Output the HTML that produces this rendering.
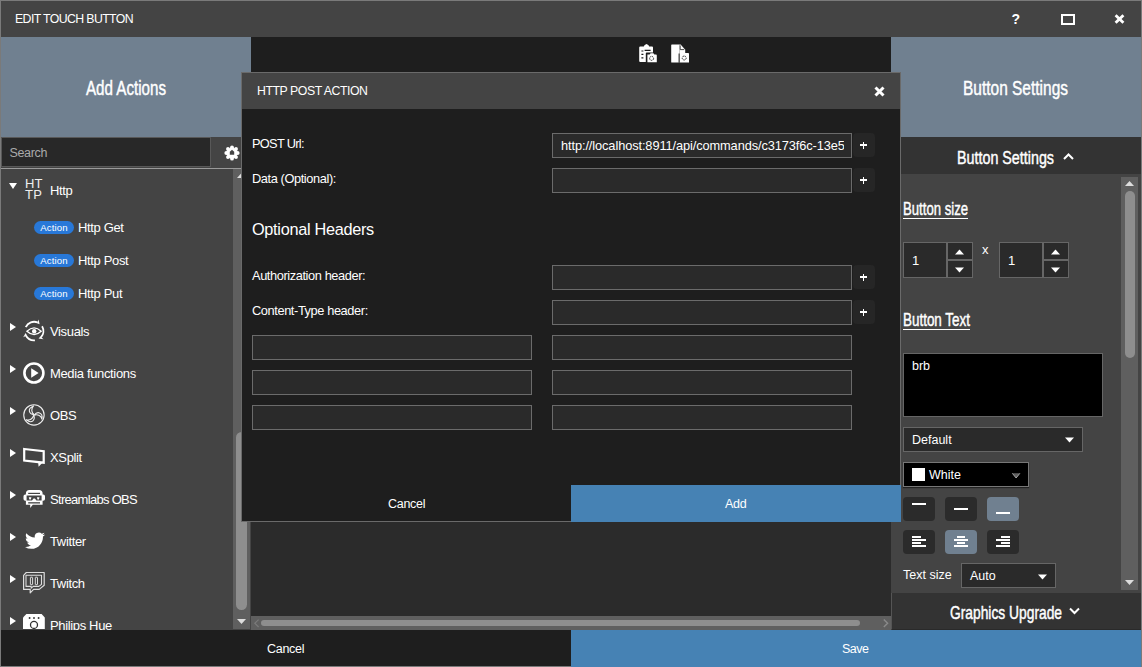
<!DOCTYPE html>
<html><head><meta charset="utf-8">
<style>
*{box-sizing:border-box;margin:0;padding:0}
html,body{width:1142px;height:667px;overflow:hidden}
body{position:relative;background:#7a7a7a;font-family:"Liberation Sans",sans-serif;color:#fff;font-size:13px}
.a{position:absolute}
.t{position:absolute;white-space:nowrap;line-height:1}
.cond{display:inline-block;transform-origin:0 0}
svg{position:absolute;overflow:visible}
.inp{position:absolute;background:#2a2a2a;border:1px solid #6b6b6b}
.plus{position:absolute;background:#262626;border-radius:4px;width:22px;height:24px}
.plus:before{content:"";position:absolute;left:7px;top:11.3px;width:7px;height:1.3px;background:#fff}
.plus:after{content:"";position:absolute;left:9.85px;top:8.5px;width:1.3px;height:7px;background:#fff}
.badge{position:absolute;left:34px;width:40px;height:13px;border-radius:7px;background:#2878d8;font-size:9.6px;line-height:13.6px;text-align:center;letter-spacing:0.1px}
.item{position:absolute;font-size:13px;line-height:1;letter-spacing:-0.35px;white-space:nowrap}
.abtn{position:absolute;width:32px;height:24px;border-radius:4px;background:#2b2b2b}
.abtn i{position:absolute;height:2px;background:#fff}
</style></head>
<body>
<!-- title bar -->
<div class="a" style="left:1px;top:1px;width:1140px;height:36px;background:#444"></div>
<div class="t" style="left:15px;top:12.5px;font-size:12.3px;letter-spacing:-0.6px">EDIT TOUCH BUTTON</div>


<div class="t" style="left:1011.5px;top:12px;font-size:14px;font-weight:bold">?</div>
<div class="a" style="left:1061px;top:14px;width:14px;height:11px;border:2px solid #fff"></div>
<svg style="left:1114px;top:14px" width="11" height="10" viewBox="0 0 11 10"><path d="M1.6 1.2l7.8 7.6M9.4 1.2l-7.8 7.6" stroke="#fff" stroke-width="2.8"/></svg>

<!-- left panel -->
<div class="a" style="left:1px;top:37px;width:250px;height:593px;background:#444"></div>
<div class="a" style="left:1px;top:37px;width:250px;height:100px;background:#708090"></div>
<div class="t" style="left:86px;top:77.7px;font-size:20.5px"><span class="cond" style="transform:scaleX(0.739);font-weight:normal;-webkit-text-stroke:0.45px #fff">Add Actions</span></div>


<!-- search row -->
<div class="a" style="left:1px;top:137px;width:210px;height:30px;background:#282828;border:1px solid #585858"></div>
<div class="t" style="left:9.5px;top:147px;font-size:12.5px;color:#aaa;letter-spacing:-0.35px">Search</div>
<svg style="left:224px;top:144.6px" width="16" height="16" viewBox="0 0 16 16"><circle cx="8" cy="8" r="5.6" fill="#fff"/><circle cx="8.00" cy="2.30" r="1.9" fill="#fff"/><circle cx="12.03" cy="3.97" r="1.9" fill="#fff"/><circle cx="13.70" cy="8.00" r="1.9" fill="#fff"/><circle cx="12.03" cy="12.03" r="1.9" fill="#fff"/><circle cx="8.00" cy="13.70" r="1.9" fill="#fff"/><circle cx="3.97" cy="12.03" r="1.9" fill="#fff"/><circle cx="2.30" cy="8.00" r="1.9" fill="#fff"/><circle cx="3.97" cy="3.97" r="1.9" fill="#fff"/><path d="M8 4.7L10.2 6.7V9.7H5.8V6.7Z" fill="#444"/></svg>
<div class="a" style="left:1px;top:168px;width:250px;height:1px;background:#9a9a9a"></div>
<!-- left scrollbar -->
<div class="a" style="left:233px;top:169px;width:17px;height:460px;background:#5f5f5f"></div>
<div class="a" style="left:236px;top:432px;width:11px;height:178px;border-radius:5.5px;background:#8e8e8e"></div>
<svg style="left:237px;top:619px" width="9" height="6"><path d="M0 0h9L4.5 5z" fill="#ddd"/></svg>
<svg style="left:237px;top:173px" width="9" height="6"><path d="M0 5h9L4.5 0z" fill="#ddd"/></svg>

<!-- Http category -->
<svg style="left:9px;top:183px" width="8" height="6"><path d="M0 0h8L4 6z" fill="#fff"/></svg>
<div class="t" style="left:25px;top:179.3px;font-size:13px;line-height:10.3px;letter-spacing:0.2px;color:#eee">HT<br>TP</div>
<div class="item" style="left:50px;top:184px">Http</div>
<div class="badge" style="top:221px">Action</div><div class="item" style="left:78px;top:221px">Http Get</div>
<div class="badge" style="top:254px">Action</div><div class="item" style="left:78px;top:254px">Http Post</div>
<div class="badge" style="top:287px">Action</div><div class="item" style="left:78px;top:287px">Http Put</div>

<!-- categories -->
<svg style="left:10px;top:323px" width="6" height="8"><path d="M0 0v8l6-4z" fill="#fff"/></svg>
<div class="item" style="left:50px;top:325px">Visuals</div>
<svg style="left:10px;top:365px" width="6" height="8"><path d="M0 0v8l6-4z" fill="#fff"/></svg>
<div class="item" style="left:50px;top:367px">Media functions</div>
<svg style="left:10px;top:407px" width="6" height="8"><path d="M0 0v8l6-4z" fill="#fff"/></svg>
<div class="item" style="left:50px;top:409px">OBS</div>
<svg style="left:10px;top:449px" width="6" height="8"><path d="M0 0v8l6-4z" fill="#fff"/></svg>
<div class="item" style="left:50px;top:451px">XSplit</div>
<svg style="left:10px;top:491px" width="6" height="8"><path d="M0 0v8l6-4z" fill="#fff"/></svg>
<div class="item" style="left:50px;top:493px;letter-spacing:-0.7px">Streamlabs OBS</div>
<svg style="left:10px;top:533px" width="6" height="8"><path d="M0 0v8l6-4z" fill="#fff"/></svg>
<div class="item" style="left:50px;top:535px">Twitter</div>
<svg style="left:10px;top:575px" width="6" height="8"><path d="M0 0v8l6-4z" fill="#fff"/></svg>
<div class="item" style="left:50px;top:577px">Twitch</div>
<svg style="left:10px;top:617px" width="6" height="8"><path d="M0 0v8l6-4z" fill="#fff"/></svg>
<div class="a" style="left:1px;top:600px;width:232px;height:30px;overflow:hidden"><div class="item" style="left:49px;top:19px">Philips Hue</div></div>


<!-- category icons -->
<svg style="left:23px;top:321px" width="22" height="22" viewBox="0 0 22 22">
 <g fill="none" stroke="#fff" stroke-width="1.8"><path d="M2.74 6.02A9.3 9.3 0 0 1 14.73 1.54"/><path d="M19.07 5.31A9.3 9.3 0 0 1 17.90 16.44"/><path d="M11.91 19.36A9.3 9.3 0 0 1 2.89 14.47"/></g>
 <g fill="#fff"><path d="M14.07 2.35L15.58 -1.57L16.58 3.34z"/><path d="M17.36 15.55L20.53 18.30L15.58 17.56z"/><path d="M3.91 14.25L0.27 16.35L2.59 11.91z"/></g>
 <path d="M3.9 10.2Q11.1 3.6 18.2 10.2Q11.1 16.8 3.9 10.2Z" fill="none" stroke="#fff" stroke-width="1.3"/>
 <circle cx="11.2" cy="10.2" r="2.2" fill="#fff"/>
</svg>
<svg style="left:23px;top:362px" width="22" height="22" viewBox="0 0 22 22">
 <circle cx="10.9" cy="11" r="9.5" fill="none" stroke="#fff" stroke-width="2.6"/>
 <path d="M8.2 6.3v9.4l7.4-4.7z" fill="#fff"/>
</svg>
<svg style="left:23px;top:404px" width="22" height="22" viewBox="0 0 22 22">
 <circle cx="10.95" cy="10.95" r="10.2" fill="none" stroke="#eee" stroke-width="1.1"/>
 <g fill="none" stroke="#eee" stroke-width="1.1" stroke-linejoin="round">
  <path d="M11 10.6C6.2 10.2 3.6 4.6 10.6 1.9C7.6 5 8.6 8.4 11 10.6Z"/><path d="M11 10.6C6.2 10.2 3.6 4.6 10.6 1.9C7.6 5 8.6 8.4 11 10.6Z" transform="rotate(120 10.95 10.95)"/><path d="M11 10.6C6.2 10.2 3.6 4.6 10.6 1.9C7.6 5 8.6 8.4 11 10.6Z" transform="rotate(240 10.95 10.95)"/>
 </g>
</svg>
<svg style="left:23px;top:448px" width="23" height="19" viewBox="0 0 23 19">
 <path d="M1.2 1L20.7 3.2V14.7L1.2 12.6Z" fill="none" stroke="#fff" stroke-width="2.2" stroke-linejoin="miter"/>
 <path d="M15.2 14.6L19.2 15L15.6 18.8Z" fill="#fff"/>
</svg>
<svg style="left:23px;top:489px" width="23" height="19" viewBox="0 0 23 19">
 <path d="M6.4 0.9H16.1A3.5 3.5 0 0 1 19.6 4.4V5.4H20.2A1.8 1.8 0 0 1 22 7.2V10A1.8 1.8 0 0 1 20.2 11.8H19.6V15.7H9.8L7.2 19V15.7H2.9V11.8H2.3A1.8 1.8 0 0 1 0.5 10V7.2A1.8 1.8 0 0 1 2.3 5.4H2.9V4.4A3.5 3.5 0 0 1 6.4 0.9Z" fill="#fff"/>
 <rect x="5.2" y="3.8" width="11.8" height="1.2" fill="#444"/>
 <path d="M3.6 6.6H18.6V11.4H13.4L11.9 9.6H10.5L9 11.4H3.6Z" fill="#444"/>
 <path d="M5.8 8.3H8.4L7.8 10.6H6.4ZM13.9 8.3H16.5L15.9 10.6H14.5Z" fill="#fff"/>
 <rect x="5.2" y="13.2" width="11.8" height="1.3" fill="#444"/>
</svg>
<svg style="left:25px;top:532px" width="20" height="17" viewBox="0 1.6 24 20.4">
 <path fill="#fff" d="M23.953 4.57a10 10 0 01-2.825.775 4.958 4.958 0 002.163-2.723c-.951.555-2.005.959-3.127 1.184a4.92 4.92 0 00-8.384 4.482C7.69 8.095 4.067 6.13 1.64 3.162a4.822 4.822 0 00-.666 2.475c0 1.71.87 3.213 2.188 4.096a4.904 4.904 0 01-2.228-.616v.06a4.923 4.923 0 003.946 4.827 4.996 4.996 0 01-2.212.085 4.936 4.936 0 004.604 3.417 9.867 9.867 0 01-6.102 2.105c-.39 0-.779-.023-1.17-.067a13.995 13.995 0 007.557 2.209c9.053 0 13.998-7.496 13.998-13.985 0-.21 0-.42-.015-.63A9.935 9.935 0 0024 4.59z"/>
</svg>
<svg style="left:23px;top:572px" width="22" height="22" viewBox="0 0 22 22">
 <path d="M3.3 0.5H21.2V13.2L16.2 17.4H10.6L7.2 20.8V17.4H0.6V3.3Z" fill="none" stroke="#ddd" stroke-width="1.2" stroke-linejoin="round"/>
 <path d="M3 3.3H18.5V12.4L15.9 14.4H10.2L8.2 16.2V14.4H3Z" fill="none" stroke="#ddd" stroke-width="1.1" stroke-linejoin="round"/>
 <rect x="7.4" y="5.2" width="2.2" height="7.5" rx="0.4" fill="none" stroke="#ddd" stroke-width="1"/>
 <rect x="12.3" y="5.2" width="2.2" height="7.5" rx="0.4" fill="none" stroke="#ddd" stroke-width="1"/>
</svg>
<div class="a" style="left:20px;top:610px;width:30px;height:19px;overflow:hidden">
<svg style="left:3px;top:4px" width="22" height="22" viewBox="0 0 22 22">
 <path d="M3.4 0H18.6L21.8 3.4V22H0V3.4Z" fill="#fff"/>
 <circle cx="6.6" cy="4" r="0.95" fill="#333"/><circle cx="11" cy="4" r="0.95" fill="#333"/><circle cx="15.6" cy="4" r="0.95" fill="#333"/>
 <circle cx="11" cy="10.9" r="3.5" fill="none" stroke="#333" stroke-width="1.3"/>
</svg></div>

<!-- center -->
<div class="a" style="left:251px;top:37px;width:640px;height:593px;background:#2b2b2b"></div>
<div class="a" style="left:251px;top:37px;width:640px;height:40px;background:#1e1e1e"></div>


<!-- toolbar icons -->
<svg style="left:639px;top:44px" width="19" height="19" viewBox="0 0 19 19">
 <path d="M1.2 2.4h3.6a3 3 0 0 1 1.8-2A1.2 1.2 0 0 1 8.4 0.4 3 3 0 0 1 10.2 2.4H13a1 1 0 0 1 1 1v5.2H7.8a1 1 0 0 0-1 1v8.4H1.2a1 1 0 0 1-1-1V3.4a1 1 0 0 1 1-1z" fill="#fff"/>
 <path d="M2.4 7h2M2.4 10.4h2M2.4 13.8h2M5.6 6.4h6" stroke="#1e1e1e" stroke-width="1.2"/>
 <path d="M8.4 10.6h2.2l1-1.4h2.8l1 1.4h1.6a0.8 0.8 0 0 1 0.8 0.8v6.8H8.4z" fill="#fff"/>
 <circle cx="12.6" cy="14.4" r="2" fill="none" stroke="#1e1e1e" stroke-width="0.9" stroke-dasharray="1.5 0.7"/>
</svg>
<svg style="left:671px;top:44px" width="19" height="19" viewBox="0 0 19 19">
 <path d="M0.8 0.6h7.6v18H0.8a0.6 0.6 0 0 1-0.6-0.6V1.2a0.6 0.6 0 0 1 0.6-0.6z" fill="#fff"/>
 <path d="M8.4 0.6h1.2l4.6 5.2v3.2H8.4z" fill="#fff"/>
 <path d="M8.8 0.8l5 5.2H8.8z" fill="#1e1e1e" opacity="0.0"/>
 <path d="M9.2 1.4v4.2h4" fill="none" stroke="#1e1e1e" stroke-width="0.8"/>
 <path d="M8.4 9h1l1-1.4h2.8l1 1.4h3a0.8 0.8 0 0 1 0.8 0.8v8.6H8.4z" fill="#fff"/>
 <path d="M7.6 9.4h1v9.4h-1z" fill="#1e1e1e"/>
 <circle cx="13.2" cy="14" r="2" fill="none" stroke="#1e1e1e" stroke-width="0.9" stroke-dasharray="1.5 0.7"/>
</svg>
<!-- horizontal scrollbar -->
<div class="a" style="left:251px;top:616px;width:640px;height:14px;background:#5f5f5f"></div>
<div class="a" style="left:261px;top:620px;width:599px;height:6px;border-radius:3px;background:#8e8e8e"></div>
<svg style="left:254px;top:619px" width="6" height="9"><path d="M4.6 0.6L0.8 4.3 4.6 8" fill="none" stroke="#7a7a7a" stroke-width="1.2"/></svg>
<svg style="left:883px;top:619px" width="6" height="9"><path d="M0.8 0.6L4.6 4.3 0.8 8" fill="none" stroke="#8a8a8a" stroke-width="1.4"/></svg>

<!-- right panel -->
<div class="a" style="left:891px;top:37px;width:250px;height:593px;background:#444"></div>
<div class="a" style="left:891px;top:37px;width:250px;height:100px;background:#708090"></div>


<div class="t" style="left:963px;top:78px;font-size:20.5px"><span class="cond" style="transform:scaleX(0.755);font-weight:normal;-webkit-text-stroke:0.45px #fff">Button Settings</span></div>
<div class="a" style="left:891px;top:137px;width:250px;height:37px;background:#333;border-left:1px solid #555"></div>
<div class="t" style="left:957px;top:148.8px;font-size:18.5px"><span class="cond" style="transform:scaleX(0.773);font-weight:normal;-webkit-text-stroke:0.45px #fff">Button Settings</span></div>
<svg style="left:1063px;top:153px" width="11" height="7"><path d="M1 6L5.5 1.5 10 6" fill="none" stroke="#fff" stroke-width="2"/></svg>
<!-- scrollbar -->
<div class="a" style="left:1121px;top:177px;width:17px;height:413px;background:#5f5f5f"></div>
<div class="a" style="left:1125px;top:191px;width:10px;height:167px;border-radius:5px;background:#8e8e8e"></div>
<svg style="left:1125px;top:181px" width="9" height="6"><path d="M0 5h9L4.5 0z" fill="#ddd"/></svg>
<svg style="left:1125px;top:580px" width="9" height="6"><path d="M0 0h9L4.5 5z" fill="#ddd"/></svg>
<!-- button size -->
<div class="t" style="left:903px;top:199px;font-size:19px"><span class="cond" style="transform:scaleX(0.692);font-weight:normal;-webkit-text-stroke:0.45px #fff">Button size</span></div><div class="a" style="left:903px;top:218px;width:65px;height:1.3px;background:#fff"></div>
<div class="a" style="left:903px;top:242px;width:44px;height:36px;background:#2a2a2a;border:1px solid #666"></div>
<div class="a" style="left:947px;top:242px;width:26px;height:18px;background:#2a2a2a;border:1px solid #666"></div>
<div class="a" style="left:947px;top:260px;width:26px;height:18px;background:#2a2a2a;border:1px solid #666"></div>
<svg style="left:955px;top:248.8px" width="10" height="6"><path d="M0 5.5h9L4.5 0.5z" fill="#fff"/></svg>
<svg style="left:955px;top:266.5px" width="10" height="6"><path d="M0 0.5h9L4.5 5.5z" fill="#fff"/></svg>
<div class="t" style="left:912px;top:254px;font-size:13px">1</div>
<div class="t" style="left:982px;top:243px;font-size:13px">x</div>
<div class="a" style="left:999px;top:242px;width:44px;height:36px;background:#2a2a2a;border:1px solid #666"></div>
<div class="a" style="left:1043px;top:242px;width:26px;height:18px;background:#2a2a2a;border:1px solid #666"></div>
<div class="a" style="left:1043px;top:260px;width:26px;height:18px;background:#2a2a2a;border:1px solid #666"></div>
<svg style="left:1051px;top:248.8px" width="10" height="6"><path d="M0 5.5h9L4.5 0.5z" fill="#fff"/></svg>
<svg style="left:1051px;top:266.5px" width="10" height="6"><path d="M0 0.5h9L4.5 5.5z" fill="#fff"/></svg>
<div class="t" style="left:1008px;top:254px;font-size:13px">1</div>
<!-- button text -->
<div class="t" style="left:903px;top:310px;font-size:19px"><span class="cond" style="transform:scaleX(0.707);font-weight:normal;-webkit-text-stroke:0.45px #fff">Button Text</span></div><div class="a" style="left:903px;top:329px;width:67px;height:1.3px;background:#fff"></div>
<div class="a" style="left:903px;top:353px;width:200px;height:64px;background:#000;border:1px solid #666"></div>
<div class="t" style="left:912px;top:360px;font-size:12.5px">brb</div>
<div class="a" style="left:903px;top:427px;width:180px;height:25px;background:#2a2a2a;border:1px solid #666"></div>
<div class="t" style="left:912px;top:434px;font-size:12.5px">Default</div>
<svg style="left:1065px;top:437px" width="10" height="6"><path d="M0 0.5h9L4.5 5.5z" fill="#fff"/></svg>
<div class="a" style="left:903px;top:462px;width:126px;height:25px;background:#000;border:1px solid #777;box-shadow:0 1px 1px rgba(0,0,0,0.5)"></div>
<div class="a" style="left:912px;top:468px;width:13px;height:13px;background:#fff"></div>
<div class="t" style="left:929px;top:469px;font-size:12.5px">White</div>
<svg style="left:1012px;top:472.8px" width="9" height="6"><path d="M0.3 0.3h7.6L4.1 5z" fill="#606060"/><path d="M0.3 0.3L4.1 5 7.9 0.3" fill="none" stroke="#b0b0b0" stroke-width="0.9"/></svg>
<!-- valign buttons -->
<div class="abtn" style="left:903px;top:497px"><i style="left:9px;top:6px;width:14px"></i></div>
<div class="abtn" style="left:945px;top:497px"><i style="left:9px;top:11px;width:14px"></i></div>
<div class="abtn" style="left:987px;top:497px;background:#708090"><i style="left:9px;top:15px;width:14px"></i></div>
<!-- halign buttons -->
<div class="abtn" style="left:903px;top:530px"><i style="left:9px;top:6px;width:9px"></i><i style="left:9px;top:9px;width:14px"></i><i style="left:9px;top:12px;width:9px"></i><i style="left:9px;top:15px;width:14px"></i></div>
<div class="abtn" style="left:945px;top:530px;background:#708090"><i style="left:12px;top:6px;width:8px"></i><i style="left:9px;top:9px;width:14px"></i><i style="left:12px;top:12px;width:8px"></i><i style="left:9px;top:15px;width:14px"></i></div>
<div class="abtn" style="left:987px;top:530px"><i style="left:14px;top:6px;width:9px"></i><i style="left:9px;top:9px;width:14px"></i><i style="left:14px;top:12px;width:9px"></i><i style="left:9px;top:15px;width:14px"></i></div>
<div class="t" style="left:903px;top:569px;font-size:12.5px">Text size</div>
<div class="a" style="left:961px;top:563px;width:95px;height:25px;background:#2a2a2a;border:1px solid #666"></div>
<div class="t" style="left:970px;top:570px;font-size:12.5px">Auto</div>
<svg style="left:1038px;top:574px" width="10" height="6"><path d="M0 0.5h9L4.5 5.5z" fill="#fff"/></svg>
<!-- graphics upgrade -->
<div class="a" style="left:891px;top:593px;width:250px;height:37px;background:#333;border-left:1px solid #555;border-bottom:1px solid #2a2a2a"></div>
<div class="t" style="left:950px;top:604px;font-size:18.5px"><span class="cond" style="transform:scaleX(0.746);font-weight:normal;-webkit-text-stroke:0.45px #fff">Graphics Upgrade</span></div>
<svg style="left:1069px;top:607px" width="11" height="8"><path d="M1 1.5L5.5 6 10 1.5" fill="none" stroke="#fff" stroke-width="2"/></svg>

<!-- bottom bar -->
<div class="a" style="left:1px;top:630px;width:570px;height:36px;background:#1e1e1e"></div>
<div class="a" style="left:571px;top:630px;width:570px;height:37px;background:#4682b4"></div>
<div class="t" style="left:267px;top:643px;font-size:12.5px;letter-spacing:-0.3px">Cancel</div>
<div class="t" style="left:842px;top:643px;font-size:12.5px;letter-spacing:-0.5px">Save</div>


<!-- modal -->
<div class="a" style="left:241px;top:72px;width:660px;height:450px;background:#1e1e1e;border:1px solid #6a6a6a"></div>
<div class="a" style="left:242px;top:73px;width:658px;height:36px;background:#444"></div>
<div class="t" style="left:257px;top:85px;font-size:12.3px;letter-spacing:-0.45px">HTTP POST ACTION</div>
<svg style="left:874px;top:86px" width="11" height="11" viewBox="0 0 11 11"><path d="M1.5 1.5l8 8M9.5 1.5l-8 8" stroke="#fff" stroke-width="3"/></svg>
<div class="t" style="left:252px;top:137.5px;font-size:12.8px;letter-spacing:-0.7px">POST Url:</div>
<div class="t" style="left:252px;top:172.5px;font-size:12.8px;letter-spacing:-0.4px">Data (Optional):</div>
<div class="inp" style="left:552px;top:133px;width:300px;height:25px;overflow:hidden"><div class="t" style="left:8px;top:5.5px;font-size:12.8px;letter-spacing:-0.1px">http://localhost:8911/api/commands/c3173f6c-13e5</div><div class="a" style="left:291px;top:0;width:8px;height:23px;background:#2a2a2a"></div></div>
<div class="plus" style="left:853px;top:133px"></div>
<div class="inp" style="left:552px;top:168px;width:300px;height:25px"></div>
<div class="plus" style="left:853px;top:168px"></div>
<div class="t" style="left:252px;top:221px;font-size:16.3px;letter-spacing:-0.3px">Optional Headers</div>
<div class="t" style="left:252px;top:269.5px;font-size:12.8px;letter-spacing:-0.4px">Authorization header:</div>
<div class="t" style="left:252px;top:304.5px;font-size:12.8px;letter-spacing:-0.4px">Content-Type header:</div>
<div class="inp" style="left:552px;top:265px;width:300px;height:25px"></div>
<div class="plus" style="left:853px;top:265px"></div>
<div class="inp" style="left:552px;top:300px;width:300px;height:25px"></div>
<div class="plus" style="left:853px;top:300px"></div>
<div class="inp" style="left:252px;top:335px;width:280px;height:25px"></div>
<div class="inp" style="left:552px;top:335px;width:300px;height:25px"></div>
<div class="inp" style="left:252px;top:370px;width:280px;height:25px"></div>
<div class="inp" style="left:552px;top:370px;width:300px;height:25px"></div>
<div class="inp" style="left:252px;top:405px;width:280px;height:25px"></div>
<div class="inp" style="left:552px;top:405px;width:300px;height:25px"></div>
<div class="a" style="left:571px;top:485px;width:330px;height:37px;background:#4682b4"></div>
<div class="t" style="left:388px;top:497.5px;font-size:12.5px;letter-spacing:-0.3px">Cancel</div>
<div class="t" style="left:725px;top:497.5px;font-size:12.5px;letter-spacing:-0.3px">Add</div>

</body></html>
